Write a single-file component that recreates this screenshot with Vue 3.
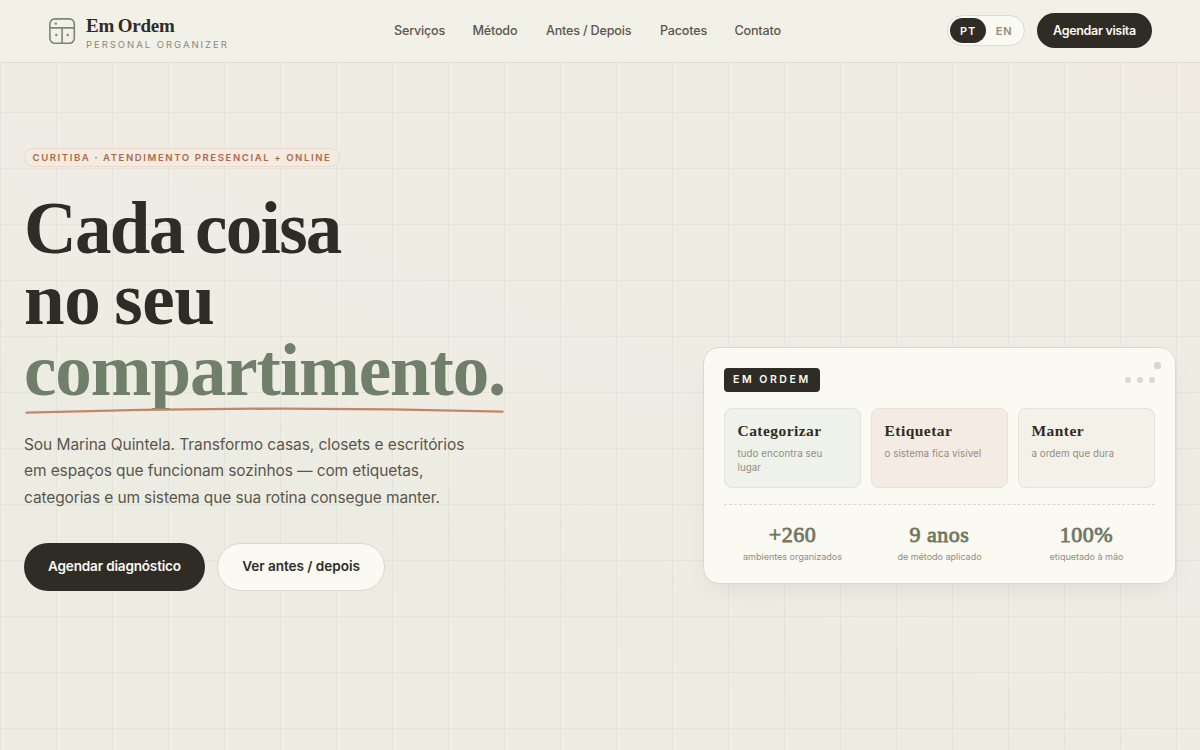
<script setup>
import { ref } from 'vue'

const lang = ref('pt')

const links = [
  { id: 'servicos', label: 'Serviços' },
  { id: 'metodo', label: 'Método' },
  { id: 'antes', label: 'Antes / Depois' },
  { id: 'pacotes', label: 'Pacotes' },
  { id: 'contato', label: 'Contato' }
]

const steps = [
  { id: 'sage', title: 'Categorizar', text: 'tudo encontra seu lugar' },
  { id: 'clay', title: 'Etiquetar', text: 'o sistema fica visível' },
  { id: 'sand', title: 'Manter', text: 'a ordem que dura' }
]

const stats = [
  { id: 'rooms', value: '+260', label: 'ambientes organizados' },
  { id: 'years', value: '9 anos', label: 'de método aplicado' },
  { id: 'labels', value: '100%', label: 'etiquetado à mão' }
]
</script>

<template>
  <div class="page">
    <header class="header">
      <a class="brand">
        <svg class="brand-icon" viewBox="0 0 28 28" fill="none" aria-hidden="true">
          <rect x="1.9" y="1.9" width="24.4" height="24.4" rx="5" stroke="currentColor" stroke-width="1.6" />
          <path d="M2 10.9H26M14.1 10.9V26" stroke="currentColor" stroke-width="1.6" />
          <circle cx="7.8" cy="6.6" r="1.2" fill="currentColor" />
          <circle cx="8.3" cy="18" r="1.2" fill="currentColor" />
          <circle cx="19.7" cy="18" r="1.2" fill="currentColor" />
        </svg>
        <span class="brand-text">
          <span class="brand-name">Em Ordem</span>
          <span class="brand-sub">PERSONAL ORGANIZER</span>
        </span>
      </a>

      <nav class="nav">
        <a v-for="link in links" :key="link.id" class="nav-link" :class="link.id">{{ link.label }}</a>
      </nav>

      <div class="actions">
        <div class="lang">
          <button type="button" class="lang-item" :class="{ active: lang === 'pt' }" @click="lang = 'pt'">PT</button>
          <button type="button" class="lang-item" :class="{ active: lang === 'en' }" @click="lang = 'en'">EN</button>
        </div>
        <a class="visit">Agendar visita</a>
      </div>
    </header>

    <main class="hero">
      <section class="intro">
        <span class="eyebrow">CURITIBA · ATENDIMENTO PRESENCIAL + ONLINE</span>
        <h1 class="title">
          <span class="line first">Cada coisa</span>
          <span class="line second">no seu</span>
          <span class="line accent">
            <span class="accent-text">compartimento.</span>
            <svg class="underline" viewBox="0 0 480 8" fill="none" aria-hidden="true">
              <path d="M2 5.6Q240 -1.8 478 4.6" stroke="#c4866a" stroke-width="2.4" stroke-linecap="round" />
            </svg>
          </span>
        </h1>
        <p class="lead">
          <span class="lead-line l1">Sou Marina Quintela. Transformo casas, closets e escritórios</span>
          <span class="lead-line l2">em espaços que funcionam sozinhos — com etiquetas,</span>
          <span class="lead-line l3">categorias e um sistema que sua rotina consegue manter.</span>
        </p>
        <div class="cta">
          <a class="btn primary">Agendar diagnóstico</a>
          <a class="btn ghost">Ver antes / depois</a>
        </div>
      </section>

      <aside class="card">
        <span class="pin"></span>
        <div class="card-head">
          <span class="tag">EM ORDEM</span>
          <span class="dots"><i></i><i></i><i></i></span>
        </div>
        <div class="steps">
          <div v-for="step in steps" :key="step.id" class="step" :class="step.id">
            <h3>{{ step.title }}</h3>
            <p>{{ step.text }}</p>
          </div>
        </div>
        <div class="stats">
          <div v-for="stat in stats" :key="stat.id" class="stat">
            <strong>{{ stat.value }}</strong>
            <span>{{ stat.label }}</span>
          </div>
        </div>
      </aside>
    </main>
  </div>
</template>

<style>
body {
  margin: 0;
  overflow: hidden;
}
</style>

<style scoped>
.page {
  height: 750px;
  overflow: hidden;
  box-sizing: border-box;
  font-family: Inter, 'Liberation Sans', sans-serif;
  color: #2f2b25;
  background:
    linear-gradient(to right, rgba(120, 140, 120, 0.075) 1px, transparent 1px) 0 0 / 56px 56px,
    linear-gradient(to bottom, rgba(120, 140, 120, 0.075) 1px, transparent 1px) 0 0 / 56px 56px,
    linear-gradient(200deg, #f0ece4 0%, #efece4 45%, #ecece3 85%);
}

.page * {
  box-sizing: border-box;
}

.header {
  height: 63px;
  padding: 0 48px 1px;
  display: grid;
  grid-template-columns: 346px 1fr auto;
  align-items: center;
  background: #f2f1e8;
  border-bottom: 1px solid #dcded3;
}

.brand {
  display: flex;
  align-items: center;
  gap: 10px;
}

.brand-icon {
  width: 28px;
  height: 28px;
  color: #7d8672;
}

.brand-text {
  display: flex;
  flex-direction: column;
  padding-top: 4px;
}

.brand-name {
  font-family: 'Liberation Serif', serif;
  font-size: 19px;
  font-weight: 700;
  line-height: 23px;
  letter-spacing: -0.2px;
  word-spacing: -1px;
}

.brand-sub {
  font-size: 9.5px;
  line-height: 15px;
  letter-spacing: 1.97px;
  color: #8b877b;
  white-space: nowrap;
}

.nav {
  display: flex;
  gap: 28px;
}

.nav-link {
  font-size: 12.6px;
  font-weight: 500;
  color: #5b564c;
  white-space: nowrap;
  letter-spacing: -0.2px;
}

.servicos {
  width: 50.5px;
}

.metodo {
  width: 45.5px;
}

.antes {
  width: 86px;
}

.pacotes {
  width: 46.5px;
}

.contato {
  width: 48px;
}

.actions {
  display: flex;
  align-items: center;
  gap: 12px;
}

.lang {
  width: 78px;
  height: 31px;
  padding: 2px;
  display: flex;
  border: 1px solid #dcdccf;
  border-radius: 16px;
  background: #faf9f2;
}

.lang-item {
  width: 36px;
  padding: 0;
  border: none;
  border-radius: 14px;
  background: transparent;
  color: #8f8b80;
  font-family: inherit;
  font-size: 11px;
  font-weight: 600;
  letter-spacing: 0.8px;
}

.lang-item.active {
  background: #2f2b25;
  color: #faf9f2;
}

.visit {
  width: 115px;
  height: 35px;
  display: flex;
  align-items: center;
  justify-content: center;
  border-radius: 18px;
  background: #2f2b25;
  color: #faf9f2;
  font-size: 12.5px;
  font-weight: 600;
  letter-spacing: -0.32px;
  white-space: nowrap;
}

.hero {
  padding: 85px 24px 0;
  display: grid;
  grid-template-columns: 1fr 473px;
}

.intro {
  display: flex;
  flex-direction: column;
  align-items: flex-start;
}

.eyebrow {
  width: 316px;
  height: 19px;
  padding-left: 7.5px;
  border: 1px solid #ecd9cb;
  border-radius: 10px;
  background: #f4ebe2;
  color: #ad6b4b;
  font-size: 9.6px;
  font-weight: 600;
  line-height: 17px;
  letter-spacing: 1.57px;
  white-space: nowrap;
}

.title {
  margin: 26px 0 0;
  font-family: 'Liberation Serif', serif;
  font-size: 73px;
  font-weight: 700;
  line-height: 71px;
}

.line {
  display: block;
  white-space: nowrap;
}

.first {
  letter-spacing: -1.7px;
  word-spacing: -5px;
}

.second {
  letter-spacing: -0.4px;
  word-spacing: -4px;
}

.accent {
  position: relative;
  width: 481px;
  height: 77px;
  letter-spacing: -1.1px;
  color: #6f7f69;
}

.accent-text {
  display: block;
  height: 75px;
  overflow-x: visible;
  overflow-y: clip;
}

.underline {
  position: absolute;
  left: 0;
  bottom: -3px;
  width: 481px;
  height: 8px;
  overflow: visible;
}

.lead {
  margin: 20px 0 0;
  font-size: 15.5px;
  line-height: 26.4px;
  color: #5b564c;
}

.lead-line {
  display: block;
  white-space: nowrap;
}

.l1 {
  letter-spacing: -0.07px;
}

.l2 {
  letter-spacing: -0.11px;
}

.l3 {
  letter-spacing: -0.12px;
}

.cta {
  margin-top: 32px;
  display: flex;
  gap: 12px;
}

.btn {
  height: 48px;
  display: flex;
  align-items: center;
  justify-content: center;
  border-radius: 24px;
  font-size: 13.6px;
  font-weight: 600;
  letter-spacing: -0.05px;
  white-space: nowrap;
}

.primary {
  width: 181px;
  padding-bottom: 3px;
  background: #2f2b25;
  color: #faf9f2;
  letter-spacing: -0.2px;
}

.ghost {
  width: 168px;
  padding-bottom: 2px;
  border: 1px solid #dad9c9;
  background: #faf9f2;
}

.card {
  position: relative;
  height: 237px;
  margin-top: 199px;
  padding: 20px;
  border: 1px solid #d9dacd;
  border-radius: 16px;
  background: #faf9f2;
  box-shadow: 0 10px 24px -10px rgba(60, 60, 40, 0.13);
}

.pin {
  position: absolute;
  top: 14px;
  right: 14px;
  width: 7px;
  height: 7px;
  border-radius: 2.5px;
  background: #d9d8ca;
}

.card-head {
  display: flex;
  align-items: center;
  justify-content: space-between;
}

.tag {
  width: 96px;
  height: 24px;
  padding-left: 9px;
  border-radius: 4px;
  background: #2f2b25;
  color: #faf9f2;
  font-size: 10.5px;
  font-weight: 600;
  line-height: 23px;
  letter-spacing: 2.55px;
  white-space: nowrap;
}

.dots {
  display: flex;
  gap: 6px;
}

.dots i {
  width: 6px;
  height: 6px;
  border-radius: 50%;
  background: #d9d8ca;
}

.steps {
  margin-top: 16px;
  display: grid;
  grid-template-columns: repeat(3, 137px);
  gap: 10px;
}

.step {
  height: 80px;
  padding: 12px 12px 0 12.5px;
  border: 1px solid #e3e4d9;
  border-radius: 8px;
}

.sage {
  padding-right: 24px;
  background: #eff2eb;
}

.clay {
  background: #f4ebe2;
}

.sand {
  background: #f4f1e8;
}

.step h3 {
  margin: 0;
  font-family: 'Liberation Serif', serif;
  font-size: 15.5px;
  font-weight: 700;
  line-height: 20px;
  letter-spacing: 0.45px;
}

.step p {
  margin: 6px 0 0;
  font-size: 9.8px;
  line-height: 14px;
  letter-spacing: 0.04px;
  color: #928e83;
}

.stats {
  margin-top: 16px;
  padding-top: 17px;
  display: grid;
  grid-template-columns: repeat(3, 137px);
  gap: 10px;
  border-top: 1px dashed #d9d8ca;
}

.stat {
  display: flex;
  flex-direction: column;
  align-items: center;
}

.stat strong {
  font-family: 'Liberation Serif', serif;
  font-size: 22px;
  font-weight: 400;
  line-height: 26px;
  letter-spacing: 0.5px;
  color: #6f7762;
  -webkit-text-stroke: 0.8px currentColor;
}

.stat span {
  margin-top: 2px;
  font-size: 9.1px;
  line-height: 14px;
  letter-spacing: -0.05px;
  color: #928e83;
  white-space: nowrap;
}
</style>
